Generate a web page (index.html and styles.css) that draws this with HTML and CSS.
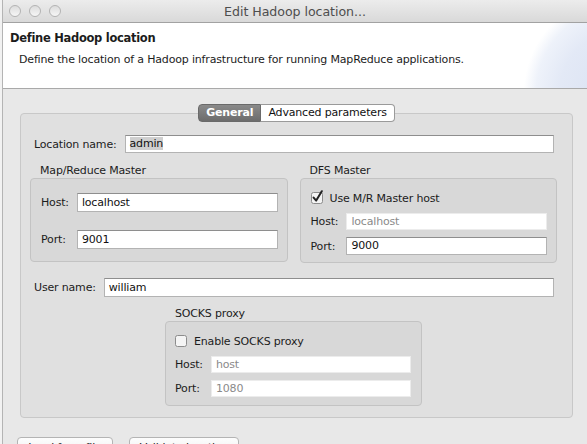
FILE: index.html
```html
<!DOCTYPE html>
<html>
<head>
<meta charset="utf-8">
<link rel="stylesheet" href="styles.css">
</head>
<body>
<div class="window">
  <div class="titlebar">
    <div class="lights"><span class="light"></span><span class="light"></span><span class="light"></span></div>
    <div class="title">Edit Hadoop location...</div>
    <div></div>
  </div>
  <div class="banner">
    <div class="banner-title">Define Hadoop location</div>
    <div class="banner-desc">Define the location of a Hadoop infrastructure for running MapReduce applications.</div>
  </div>
  <div class="content">
    <div class="tabfolder">
      <div class="tabbar"><span class="tab active">General</span><span class="tab">Advanced parameters</span></div>
      <div class="panel">
        <div class="field loc"><span class="lbl">Location name:</span><span class="input"><span class="sel">admin</span></span></div>
        <div class="groups">
          <div class="group">
            <div class="group-title">Map/Reduce Master</div>
            <div class="group-box mr">
              <span class="lbl">Host:</span><span class="input tall">localhost</span>
              <span class="lbl">Port:</span><span class="input tall">9001</span>
            </div>
          </div>
          <div class="group">
            <div class="group-title">DFS Master</div>
            <div class="group-box dfs">
              <div class="check span2"><svg class="cb" width="14" height="14" viewBox="0 0 14 14"><rect x="0.5" y="2.5" width="11" height="11" rx="2" fill="#f4f4f4" stroke="#8c8c8c"/><path d="M2.6 7.6 L5.2 10.6 L10.8 1.2" fill="none" stroke="#222" stroke-width="2" stroke-linecap="round" stroke-linejoin="round"/></svg><span>Use M/R Master host</span></div>
              <span class="lbl">Host:</span><span class="input disabled">localhost</span>
              <span class="lbl">Port:</span><span class="input">9000</span>
            </div>
          </div>
        </div>
        <div class="field user"><span class="lbl">User name:</span><span class="input tall">william</span></div>
        <div class="socks-wrap">
          <div class="group socks">
            <div class="group-title">SOCKS proxy</div>
            <div class="group-box sbox">
              <div class="check span2"><svg class="cb" width="14" height="14" viewBox="0 0 14 14"><rect x="0.5" y="2.5" width="11" height="11" rx="2" fill="#f4f4f4" stroke="#8c8c8c"/></svg><span>Enable SOCKS proxy</span></div>
              <span class="lbl">Host:</span><span class="input disabled">host</span>
              <span class="lbl">Port:</span><span class="input disabled">1080</span>
            </div>
          </div>
        </div>
      </div>
    </div>
    <div class="buttons">
      <span class="btn b1">Load from file</span>
      <span class="btn b2">Validate location</span>
    </div>
  </div>
</div>
</body>
</html>
```
FILE: styles.css
```css
* { box-sizing: border-box; }
html, body { margin: 0; padding: 0; }
body {
  width: 587px; height: 444px; overflow: hidden;
  background: #f2f2f2;
  font-family: "DejaVu Sans", sans-serif; font-size: 11px; color: #1c1c1c;
  letter-spacing: -0.17px;
}
.window {
  margin-left: 2px; border-left: 1px solid #b4b4b4;
  height: 444px; background: #e8e8e8; overflow: hidden;
}
.titlebar {
  height: 23px; display: grid; grid-template-columns: 1fr auto 1fr; align-items: center;
  background: linear-gradient(#ececec, #d9d9d9);
  border-bottom: 1px solid #a2a2a2;
}
.lights { display: flex; gap: 8px; padding-left: 6px; }
.light {
  width: 12px; height: 12px; border-radius: 50%;
  border: 1px solid #b3b3b3;
  background: linear-gradient(#dcdcdc, #f6f6f6);
}
.title { font-size: 12.6px; color: #4e4e4e; letter-spacing: -0.05px; }
.banner {
  position: relative; height: 66px; background: #fff;
  border-bottom: 1px solid #a9a9a9; padding: 8px 0 0 7px; overflow: hidden;
}
.banner::after {
  content: ""; position: absolute; right: -80px; top: -20px; width: 150px; height: 150px; border-radius: 50%;
  background: radial-gradient(circle at 70% 60%, #d9e1f2 0, #e3e9f6 45%, #eef2fa 62%, rgba(255,255,255,0) 71%);
}
.banner-title { font-weight: bold; font-size: 11.5px; letter-spacing: -0.3px; line-height: 15px; }
.banner-desc { margin: 6px 0 0 9px; line-height: 15px; }
.content { padding: 15px 14px 0 14px; }
.tabfolder { margin-left: 3px; }
.tabbar { display: flex; justify-content: center; margin-bottom: -9px; position: relative; z-index: 1; }
.tab {
  height: 18px; line-height: 16px; padding: 0 7px; background: #fff;
  border: 1px solid #9a9a9a; color: #111;
}
.tab:first-child { border-radius: 4px 0 0 4px; }
.tab:last-child { border-radius: 0 4px 4px 0; border-left: none; }
.tab.active {
  background: linear-gradient(#8a8a8a, #6c6c6c); color: #fff; border-color: #6a6a6a;
  font-weight: bold; padding: 0 7px;
}
.panel {
  background: #e0e0e0; border: 1px solid #c8c8c8; border-radius: 4px;
  padding: 21px 15px 11px 9px;
}
.field { display: flex; align-items: center; gap: 8px; }
.field.loc { margin: 0 3px 0 4px; }
.field.user { margin: 15px 3px 0 4px; }
.input {
  flex: 1; height: 18px; line-height: 16px; padding: 0 4px; background: #fff;
  border: 1px solid #b3b3b3; border-top-color: #8e8e8e; color: #111; white-space: nowrap;
}
.input.tall { height: 19px; line-height: 17px; }
.input.disabled { border-color: #ececec; color: #8a8a8a; height: 17px; line-height: 15px; }
.sel { background: #cfcfcf; }
.groups { display: grid; grid-template-columns: 1fr 1fr; gap: 12px; margin-top: 11px; }
.group-title { line-height: 14px; padding-left: 10px; }
.group-box {
  background: #d8d8d8; border: 1px solid #c3c3c3; border-radius: 4px;
  display: grid; grid-template-columns: auto 1fr; align-items: center; column-gap: 8px;
}
.group-box.mr { padding: 14px 9px 12px 10px; row-gap: 18px; }
.group-box.dfs { padding: 11px 9px 7px 10px; row-gap: 7px; }
.group-box.dfs .input:last-child { height: 18px; }
.span2 { grid-column: 1 / 3; }
.check { display: flex; align-items: center; gap: 5px; height: 16px; }
.cb { flex: none; margin-top: -3px; }
.socks-wrap { display: flex; justify-content: center; margin-top: 10px; }
.socks { width: 257px; }
.group-box.sbox { padding: 11px 10px 8px 9px; row-gap: 7px; }
.buttons { display: flex; gap: 16px; margin-top: 19px; }
.btn {
  height: 22px; line-height: 20px; border: 1px solid #b4b4b4; border-radius: 4px;
  background: linear-gradient(#fdfdfd, #ececec); text-align: center; color: #222;
}
.b1 { width: 96px; }
.b2 { width: 110px; }
```
